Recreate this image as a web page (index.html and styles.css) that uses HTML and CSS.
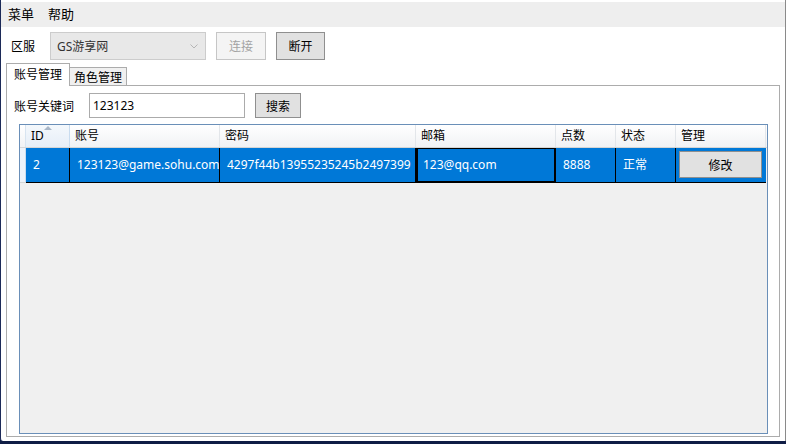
FILE: index.html
```html
<!DOCTYPE html>
<html>
<head>
<meta charset="utf-8">
<link rel="stylesheet" href="styles.css">
</head>
<body>
<div class="window">
  <div class="menubar">
    <span class="menu-item m1">菜单</span>
    <span class="menu-item m2">帮助</span>
  </div>
  <div class="toolbar">
    <span class="lbl-server">区服</span>
    <div class="combo">
      <span class="combo-text">GS游享网</span>
      <svg class="chev" width="8" height="5" viewBox="0 0 8 5"><path d="M0.5 0.5 L4 4 L7.5 0.5" fill="none" stroke="#b5b5b5" stroke-width="1"/></svg>
    </div>
    <button class="btn btn-disabled">连接</button>
    <button class="btn btn-normal">断开</button>
  </div>
  <div class="tabs">
    <div class="tab tab-active">账号管理</div>
    <div class="tab tab-inactive">角色管理</div>
  </div>
  <div class="panel">
    <div class="search-row">
      <span class="lbl-key">账号关键词</span>
      <div class="textbox">123123</div>
      <button class="btn btn-search">搜索</button>
    </div>
    <div class="datagrid">
      <div class="grid-row header">
        <div class="hcell rowhead"></div>
        <div class="hcell id-col">ID<span class="sort-arrow"></span></div>
        <div class="hcell">账号</div>
        <div class="hcell">密码</div>
        <div class="hcell">邮箱</div>
        <div class="hcell">点数</div>
        <div class="hcell">状态</div>
        <div class="hcell">管理</div>
      </div>
      <div class="grid-row data">
        <div class="dcell rowhead-d"></div>
        <div class="dcell">2</div>
        <div class="dcell">123123@game.sohu.com</div>
        <div class="dcell">4297f44b13955235245b2497399</div>
        <div class="dcell focused">123@qq.com</div>
        <div class="dcell">8888</div>
        <div class="dcell">正常</div>
        <div class="dcell action"><button class="btn btn-edit">修改</button></div>
      </div>
    </div>
  </div>
</div>
</body>
</html>
```

FILE: styles.css
```css
* { box-sizing: border-box; }
html, body {
  margin: 0;
  padding: 0;
  width: 786px;
  height: 444px;
  overflow: hidden;
  background: #0f1d45;
  font-family: "Noto Sans", "Noto Sans CJK SC", sans-serif;
  font-size: 12px;
  color: #000;
}
.window {
  width: 786px;
  height: 441px;
  background: #ffffff;
  border-left: 1px solid #1c2a58;
  border-right: 1px solid #8a8a8a;
  padding-top: 2px;
  border-bottom-left-radius: 3px;
}
.menubar {
  height: 25px;
  background: #eeeeee;
  display: flex;
  align-items: center;
  font-size: 13px;
}
.menu-item { line-height: 25px; }
.m1 { margin-left: 7px; }
.m2 { margin-left: 14px; }

.toolbar {
  display: flex;
  align-items: center;
  margin-top: 5px;
  height: 28px;
  padding-left: 10px;
}
.lbl-server { width: 39px; }
.combo {
  width: 156px;
  height: 28px;
  background: #e8e8e8;
  border: 1px solid #cccccc;
  display: flex;
  align-items: center;
  justify-content: space-between;
  padding: 0 7px 0 6px;
  color: #333;
}
.btn {
  font-family: "Noto Sans", "Noto Sans CJK SC", sans-serif;
  font-size: 12px;
  padding: 0;
  margin: 0;
  display: flex;
  align-items: center;
  justify-content: center;
}
.btn-disabled {
  width: 50px;
  height: 28px;
  margin-left: 10px;
  background: #f4f4f4;
  border: 1px solid #c6c6c6;
  color: #a3a3a3;
}
.btn-normal {
  width: 49px;
  height: 28px;
  margin-left: 10px;
  background: #e1e1e1;
  border: 1px solid #8f8f8f;
  color: #000;
}

.tabs {
  display: flex;
  align-items: flex-end;
  height: 22px;
  margin-top: 3px;
  padding-left: 5px;
}
.tab {
  display: flex;
  align-items: center;
  justify-content: center;
  border: 1px solid #acacac;
  border-bottom: none;
}
.tab-active {
  width: 64px;
  height: 23px;
  margin-bottom: -1px;
  background: #ffffff;
  position: relative;
  z-index: 1;
  padding-bottom: 2px;
}
.tab-inactive {
  width: 58px;
  height: 18px;
  margin-left: -1px;
  background: #f0f0f0;
}
.panel {
  margin-left: 5px;
  width: 774px;
  height: 352px;
  border: 1px solid #acacac;
  background: #ffffff;
  padding: 7px 11px 2px 12px;
  display: flex;
  flex-direction: column;
}
.search-row {
  display: flex;
  align-items: center;
  height: 25px;
  margin-left: -5px;
}
.lbl-key { width: 75px; }
.textbox {
  width: 156px;
  height: 25px;
  border: 1px solid #ababab;
  display: flex;
  align-items: center;
  padding-left: 3px;
}
.btn-search {
  width: 46px;
  height: 25px;
  margin-left: 10px;
  background: #e1e1e1;
  border: 1px solid #8f8f8f;
}
.datagrid {
  margin-top: 6px;
  flex: 1;
  border: 1px solid #6a8fb8;
  background: #f0f0f0;
}
.grid-row {
  display: grid;
  grid-template-columns: 6px 44px 150px 196px 140px 60px 60px 90px;
}
.header {
  height: 23px;
  background: linear-gradient(#ffffff, #f1f2f4);
  border-bottom: 1px solid #d5d5d5;
}
.hcell {
  border-right: 1px solid #e3e6ea;
  padding-left: 5px;
  line-height: 22px;
  white-space: nowrap;
  overflow: hidden;
}
.hcell.rowhead { padding: 0; border-right: 1px solid #d8e4f0; }
.id-col {
  position: relative;
  border-right: 1px solid #c9dcef;
  background: linear-gradient(#f4f8fc, #e6eef7);
}
.sort-arrow {
  position: absolute;
  left: 18px;
  top: 1px;
  width: 0;
  height: 0;
  border-left: 4px solid transparent;
  border-right: 4px solid transparent;
  border-bottom: 4px solid #a9b7c8;
}
.data {
  height: 35px;
}
.dcell {
  background: #0078d7;
  color: #ffffff;
  border-right: 1px solid #000;
  border-bottom: 1px solid #000;
  padding-left: 7px;
  line-height: 34px;
  white-space: nowrap;
  overflow: hidden;
}
.dcell.rowhead-d {
  background: #eef3fa;
  border-right: 1px solid #c9dcef;
  border-bottom: 1px solid #d5d5d5;
  padding: 0;
}
.dcell.focused {
  border: 2px solid #000;
  border-top-width: 1px;
  padding-left: 5px;
  line-height: 32px;
}
.dcell.action {
  padding: 3px 4px 4px 3px;
  border-right: none;
}
.btn-edit {
  width: 100%;
  height: 27px;
  background: #e1e1e1;
  border: 1px solid #8f8f8f;
  color: #000;
}
```
